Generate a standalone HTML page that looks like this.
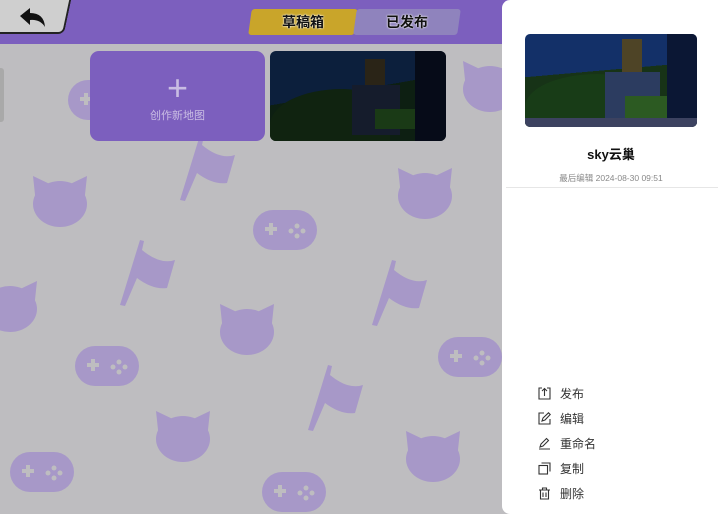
<!DOCTYPE html>
<html><head><meta charset="utf-8"><style>
*{margin:0;padding:0;box-sizing:border-box}
html,body{width:720px;height:514px;overflow:hidden}
body{position:relative;background:#bebdc0;font-family:"Liberation Sans","Noto Sans CJK SC",sans-serif}
.hdr{position:absolute;left:0;top:0;width:720px;height:44px;background:#7c5fbe}
.back{position:absolute;left:-10px;top:-4px;width:78px;height:38px;background:#cfcfcf;border:2px solid #222;border-top:none;transform:skewX(-12deg);border-radius:0 0 6px 0}
.tab{position:absolute;top:9px;height:26px;transform:skewX(-8deg);font-weight:bold;font-size:14px;color:#111;text-align:center;line-height:26px;border-radius:3px}
.tab span{display:inline-block;transform:skewX(8deg);text-shadow:0 0 2px #fff,0 0 1px #fff}
.panel{position:absolute;left:502px;top:0;width:218px;height:514px;background:#fff;border-radius:8px 0 0 8px}
.menu div{position:absolute;left:36px;font-size:12px;color:#333;display:flex;align-items:center}
.menu svg{margin-right:9px}
</style></head><body>
<svg width="502" height="470" style="position:absolute;left:0;top:44px" viewBox="0 44 502 470">
<defs>
<g id="cat"><ellipse cx="0" cy="4" rx="27" ry="23"/><path d="M-27,-24 L-24,4 L-6,-14 Z M27,-24 L24,4 L6,-14 Z"/></g>
<g id="pad"><rect x="-32" y="-20" width="64" height="40" rx="20"/><g fill="#bebdc0"><rect x="-20" y="-3" width="12" height="4"/><rect x="-16" y="-7" width="4" height="12"/><circle cx="12" cy="-4" r="2.5"/><circle cx="18" cy="1" r="2.5"/><circle cx="12" cy="6" r="2.5"/><circle cx="6" cy="1" r="2.5"/></g></g>
<g id="flag"><path d="M-25,35 L-5,-30 L-1,-29 L-3,-20 Q15,-5 30,-10 L22,18 Q8,20 -8,8 L-20,36 Z"/></g>
</defs>
<g fill="#a798c8">
<use href="#cat" x="60" y="200"/><use href="#cat" x="425" y="192"/><use href="#cat" x="247" y="328"/><use href="#cat" x="183" y="435"/><use href="#cat" x="433" y="455"/><use href="#cat" x="490" y="85"/><use href="#cat" x="10" y="305"/>
<use href="#pad" x="285" y="230"/><use href="#pad" x="107" y="366"/><use href="#pad" x="470" y="357"/><use href="#pad" x="42" y="472"/><use href="#pad" x="294" y="492"/><use href="#pad" x="100" y="100"/>
<use href="#flag" x="205" y="165"/><use href="#flag" x="145" y="270"/><use href="#flag" x="397" y="290"/><use href="#flag" x="333" y="395"/>
</g></svg>
<div class="hdr"></div>
<div class="back"></div>
<svg style="position:absolute;left:18px;top:7px" width="30" height="22" viewBox="0 0 30 22"><path d="M2,9 L12,1 L12,6 Q26,6 27,20 Q22,12 12,13 L12,18 Z" fill="#111"/></svg>
<div class="tab" style="left:250px;width:106px;background:#c9a52a"><span>草稿箱</span></div>
<div class="tab" style="left:355px;width:104px;background:#8f83bd"><span>已发布</span></div>
<div style="position:absolute;left:0;top:68px;width:4px;height:54px;background:#a9a9a9;border-radius:0 3px 3px 0"></div>
<div style="position:absolute;left:90px;top:51px;width:175px;height:90px;background:#7c5fbe;border-radius:9px;color:#c9bde3;text-align:center">
<div style="font-size:36px;line-height:34px;margin-top:20px;font-weight:200">+</div>
<div style="font-size:11px;margin-top:2px">创作新地图</div></div>
<div style="position:absolute;left:270px;top:51px;width:176px;height:90px;border-radius:6px;overflow:hidden;background:linear-gradient(170deg,#0c1f3c 0 45%,#0d1f12 45%)">
<div style="position:absolute;left:0;top:38px;width:120px;height:60px;background:#102310;border-radius:60% 40% 0 0"></div>
<div style="position:absolute;left:95px;top:8px;width:20px;height:30px;background:#2a2417"></div>
<div style="position:absolute;left:82px;top:34px;width:48px;height:50px;background:#151c2c"></div>
<div style="position:absolute;left:105px;top:58px;width:45px;height:20px;background:#1a3a16"></div>
<div style="position:absolute;left:145px;top:0;width:31px;height:90px;background:#060b18"></div>
</div>
<div class="panel">
<div style="position:absolute;left:23px;top:34px;width:172px;height:93px;border-radius:5px;overflow:hidden;background:linear-gradient(175deg,#133068 0 40%,#173317 40%)">
<div style="position:absolute;left:0;top:40px;width:120px;height:55px;background:#183c17;border-radius:60% 40% 0 0"></div>
<div style="position:absolute;left:97px;top:5px;width:20px;height:35px;background:#4e4426"></div>
<div style="position:absolute;left:80px;top:38px;width:55px;height:55px;background:#2c3c60"></div>
<div style="position:absolute;left:100px;top:62px;width:50px;height:22px;background:#2c5a22"></div>
<div style="position:absolute;left:142px;top:0;width:30px;height:93px;background:#0b1734"></div>
<div style="position:absolute;left:0;top:84px;width:172px;height:9px;background:#3c4260"></div>
</div>
<div style="position:absolute;left:0;top:144px;width:218px;text-align:center;font-weight:bold;font-size:13px;color:#111">sky云巢</div>
<div style="position:absolute;left:0;top:172px;width:218px;text-align:center;font-size:8.5px;color:#888">最后编辑 2024-08-30 09:51</div>
<div style="position:absolute;left:4px;top:187px;width:212px;height:1px;background:#e6e6e6"></div>
<div class="menu">
<div style="top:385px"><svg width="13" height="13" viewBox="0 0 13 13" fill="none" stroke="#333" stroke-width="1.1"><path d="M4,1H1V12H12V1H9M6.5,9V1.5M4,4L6.5,1.5L9,4"/></svg>发布</div>
<div style="top:410px"><svg width="13" height="13" viewBox="0 0 13 13" fill="none" stroke="#333" stroke-width="1.1"><path d="M6,1H1V12H12V7M4,9L5,6L10.5,0.8L12.2,2.5L7,8Z"/></svg>编辑</div>
<div style="top:435px"><svg width="13" height="13" viewBox="0 0 13 13" fill="none" stroke="#333" stroke-width="1.1"><path d="M1,12H12M2,10L3,7L8.5,1.5L10.5,3.5L5,9Z"/></svg>重命名</div>
<div style="top:460px"><svg width="13" height="13" viewBox="0 0 13 13" fill="none" stroke="#333" stroke-width="1.1"><rect x="1" y="3.5" width="8.5" height="8.5"/><path d="M3.5,1H12V9.5"/></svg>复制</div>
<div style="top:485px"><svg width="13" height="13" viewBox="0 0 13 13" fill="none" stroke="#333" stroke-width="1.1"><path d="M1,3H12M4.5,3V1H8.5V3M2.5,3V12H10.5V3M5,5.5V10M8,5.5V10"/></svg>删除</div>
</div>
</div>
</body></html>
